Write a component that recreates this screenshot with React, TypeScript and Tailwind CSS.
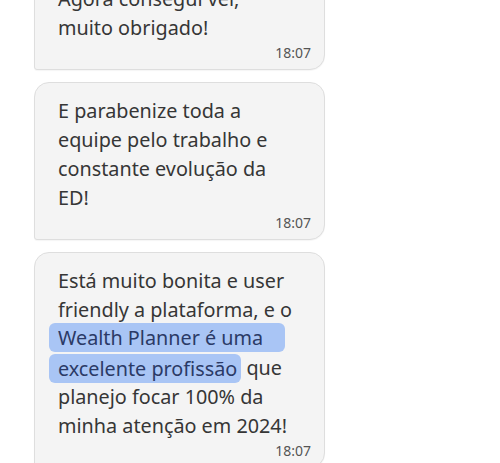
import React from "react";

const font = { fontFamily: '"Noto Sans", "Open Sans", sans-serif' };

function Bubble({ children, className = "" }: { children: React.ReactNode; className?: string }) {
  return (
    <div
      className={
        "w-[291px] ml-[34px] rounded-[15px] rounded-bl-[3px] border border-[#dedede] bg-[#f4f4f4] pl-[23px] pr-[13px] pt-[13px] pb-[8px] shadow-[0_1px_1px_rgba(0,0,0,0.04)] " +
        className
      }
    >
      <div className="text-[19.8px] leading-[29px] text-[#363636]">{children}</div>
      <div className="mt-[2px] flex justify-end text-[14px] leading-[17px] text-[#555555]">18:07</div>
    </div>
  );
}

export default function App() {
  return (
    <div className="h-[463px] w-[500px] overflow-hidden bg-white" style={font}>
      <div className="-mt-[30px] flex flex-col gap-[12px]">
        <Bubble>
          <div>Agora consegui ver,</div>
          <div>muito obrigado!</div>
        </Bubble>
        <Bubble>
          <div>E parabenize toda a</div>
          <div>equipe pelo trabalho e</div>
          <div>constante evolução da</div>
          <div>ED!</div>
        </Bubble>
        <Bubble>
          <div>Está muito bonita e user</div>
          <div>friendly a plataforma, e o</div>
          <div>
            <span className="-ml-[9px] inline-block h-[29px] rounded-[6px] bg-[#a9c5f5] pl-[9px] pr-[22px] text-[#2b3a66] -translate-y-[1px]">
              Wealth Planner é uma
            </span>
          </div>
          <div>
            <span className="-ml-[9px] inline-block h-[29px] rounded-[6px] bg-[#a9c5f5] pl-[9px] pr-[4px] text-[#2b3a66] translate-y-[1px]">
              excelente profissão
            </span>{" "}
            que
          </div>
          <div>planejo focar 100% da</div>
          <div>minha atenção em 2024!</div>
        </Bubble>
      </div>
    </div>
  );
}
